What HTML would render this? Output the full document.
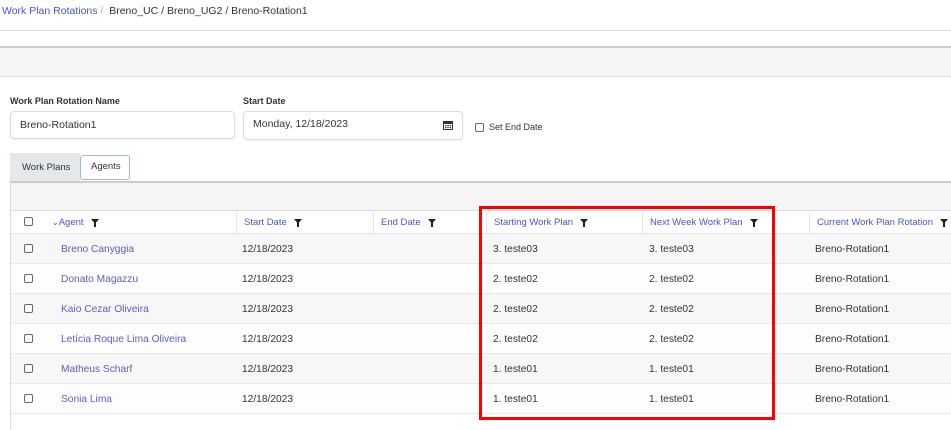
<!DOCTYPE html>
<html><head><meta charset="utf-8"><style>
*{box-sizing:border-box;margin:0;padding:0}
body{width:951px;height:430px;overflow:hidden;background:#fff;font-family:"Liberation Sans",sans-serif;color:#333;position:relative;font-size:11px}
.a{position:absolute}
.lbl{font-size:9px;font-weight:bold;color:#333}
.inp{border:1px solid #d8dbe0;border-radius:4px;background:#fff;font-size:10.5px;color:#333;padding-left:9px;display:flex;align-items:center;box-shadow:0 1px 1px rgba(0,0,0,.05)}
.hd{font-size:9.5px;color:#4a55c8;line-height:12px;white-space:nowrap}
.cb{width:9px;height:9px;border:1px solid #666;border-radius:2px;background:#fff}
.f{display:inline-block;vertical-align:top;margin-left:7px;margin-top:2px}
.row{position:absolute;left:11px;width:940px;height:30px;border-bottom:1px solid #e8e8e8}
.row span{position:absolute;top:10px;font-size:10.2px;white-space:nowrap}
.n{color:#5a5fc0}
</style></head><body>
<div class="a" style="left:2px;top:5px;font-size:10.5px"><span style="color:#4a55c8">Work Plan Rotations</span><span style="color:#aaa">&nbsp;/ &nbsp;</span><span>Breno_UC / Breno_UG2 / Breno-Rotation1</span></div>
<div class="a" style="left:0;top:30px;width:951px;height:1px;background:#ddd"></div>
<div class="a" style="left:0;top:46px;width:951px;height:31px;background:#f5f5f5;border-top:2px solid #ccc;border-bottom:1px solid #ddd"></div>
<div class="a lbl" style="left:10px;top:96px">Work Plan Rotation Name</div>
<div class="a lbl" style="left:243px;top:96px">Start Date</div>
<div class="a inp" style="left:10px;top:111px;width:225px;height:28px">Breno-Rotation1</div>
<div class="a inp" style="left:243px;top:111px;width:220px;height:29px;padding-bottom:3px">Monday, 12/18/2023
<svg class="a" style="left:199px;top:8px" width="10" height="10" viewBox="0 0 10 10"><rect x="0" y="1" width="10" height="9" fill="#333"/><rect x="1" y="4" width="8" height="5" fill="#fff"/><g fill="#333"><rect x="2" y="5" width="1.5" height="1.2"/><rect x="4.3" y="5" width="1.5" height="1.2"/><rect x="6.6" y="5" width="1.5" height="1.2"/><rect x="2" y="7" width="1.5" height="1.2"/><rect x="4.3" y="7" width="1.5" height="1.2"/><rect x="6.6" y="7" width="1.5" height="1.2"/></g></svg></div>
<div class="a cb" style="left:475px;top:123px"></div>
<div class="a" style="left:489px;top:122px;font-size:9px">Set End Date</div>
<div class="a" style="left:10px;top:153px;width:70px;height:29px;background:#e4e7ec;font-size:9.5px;padding:9px 0 0 12px">Work Plans</div>
<div class="a" style="left:80px;top:155px;width:50px;height:25px;border:1px solid #9db8ea;border-radius:3px;background:#fff;font-size:9.5px;padding:5px 0 0 10px">Agents</div>
<div class="a" style="left:10px;top:181px;width:941px;height:249px;border-left:1px solid #ddd;border-top:2px solid #ccc"></div>
<div class="a" style="left:11px;top:183px;width:940px;height:28px;background:#f5f5f5;border-bottom:1px solid #ddd"></div>
<div class="a" style="left:11px;top:212px;width:940px;height:22px;background:#fff;border-bottom:1px solid #e4e4e4"></div>
<div class="a cb" style="left:24px;top:217px"></div>
<div class="a hd" style="left:52px;top:217px"><span style="font-size:8px;color:#555">⌄</span>Agent<svg class="f" width="8" height="8" viewBox="0 0 8 8"><path d="M0 0H8L5 3.5V8H3V3.5Z" fill="#222"/></svg></div>
<div class="a" style="left:236px;top:212px;width:1px;height:22px;background:#e4e4e4"></div>
<div class="a hd" style="left:244px;top:217px">Start Date<svg class="f" width="8" height="8" viewBox="0 0 8 8"><path d="M0 0H8L5 3.5V8H3V3.5Z" fill="#222"/></svg></div>
<div class="a" style="left:373px;top:212px;width:1px;height:22px;background:#e4e4e4"></div>
<div class="a hd" style="left:381px;top:217px">End Date<svg class="f" width="8" height="8" viewBox="0 0 8 8"><path d="M0 0H8L5 3.5V8H3V3.5Z" fill="#222"/></svg></div>
<div class="a" style="left:486px;top:212px;width:1px;height:22px;background:#e4e4e4"></div>
<div class="a hd" style="left:494px;top:217px">Starting Work Plan<svg class="f" width="8" height="8" viewBox="0 0 8 8"><path d="M0 0H8L5 3.5V8H3V3.5Z" fill="#222"/></svg></div>
<div class="a" style="left:642px;top:212px;width:1px;height:22px;background:#e4e4e4"></div>
<div class="a hd" style="left:650px;top:217px">Next Week Work Plan<svg class="f" width="8" height="8" viewBox="0 0 8 8"><path d="M0 0H8L5 3.5V8H3V3.5Z" fill="#222"/></svg></div>
<div class="a" style="left:809px;top:212px;width:1px;height:22px;background:#e4e4e4"></div>
<div class="a hd" style="left:817px;top:217px">Current Work Plan Rotation<svg class="f" width="8" height="8" viewBox="0 0 8 8"><path d="M0 0H8L5 3.5V8H3V3.5Z" fill="#222"/></svg></div>

<div class="row" style="top:234px;background:#f7f7f7"><div class="a cb" style="left:13px;top:10px"></div><span class="n" style="left:50px">Breno Canyggia</span><span style="left:231px">12/18/2023</span><span style="left:482px">3. teste03</span><span style="left:638px">3. teste03</span><span style="left:804px">Breno-Rotation1</span></div>
<div class="row" style="top:264px;background:#fdfdfd"><div class="a cb" style="left:13px;top:10px"></div><span class="n" style="left:50px">Donato Magazzu</span><span style="left:231px">12/18/2023</span><span style="left:482px">2. teste02</span><span style="left:638px">2. teste02</span><span style="left:804px">Breno-Rotation1</span></div>
<div class="row" style="top:294px;background:#f7f7f7"><div class="a cb" style="left:13px;top:10px"></div><span class="n" style="left:50px">Kaio Cezar Oliveira</span><span style="left:231px">12/18/2023</span><span style="left:482px">2. teste02</span><span style="left:638px">2. teste02</span><span style="left:804px">Breno-Rotation1</span></div>
<div class="row" style="top:324px;background:#fdfdfd"><div class="a cb" style="left:13px;top:10px"></div><span class="n" style="left:50px">Letícia Roque Lima Oliveira</span><span style="left:231px">12/18/2023</span><span style="left:482px">2. teste02</span><span style="left:638px">2. teste02</span><span style="left:804px">Breno-Rotation1</span></div>
<div class="row" style="top:354px;background:#f7f7f7"><div class="a cb" style="left:13px;top:10px"></div><span class="n" style="left:50px">Matheus Scharf</span><span style="left:231px">12/18/2023</span><span style="left:482px">1. teste01</span><span style="left:638px">1. teste01</span><span style="left:804px">Breno-Rotation1</span></div>
<div class="row" style="top:384px;background:#fdfdfd"><div class="a cb" style="left:13px;top:10px"></div><span class="n" style="left:50px">Sonia Lima</span><span style="left:231px">12/18/2023</span><span style="left:482px">1. teste01</span><span style="left:638px">1. teste01</span><span style="left:804px">Breno-Rotation1</span></div>

<div class="a" style="left:479px;top:206px;width:296px;height:214px;border:3px solid #f00"></div>
</body></html>
